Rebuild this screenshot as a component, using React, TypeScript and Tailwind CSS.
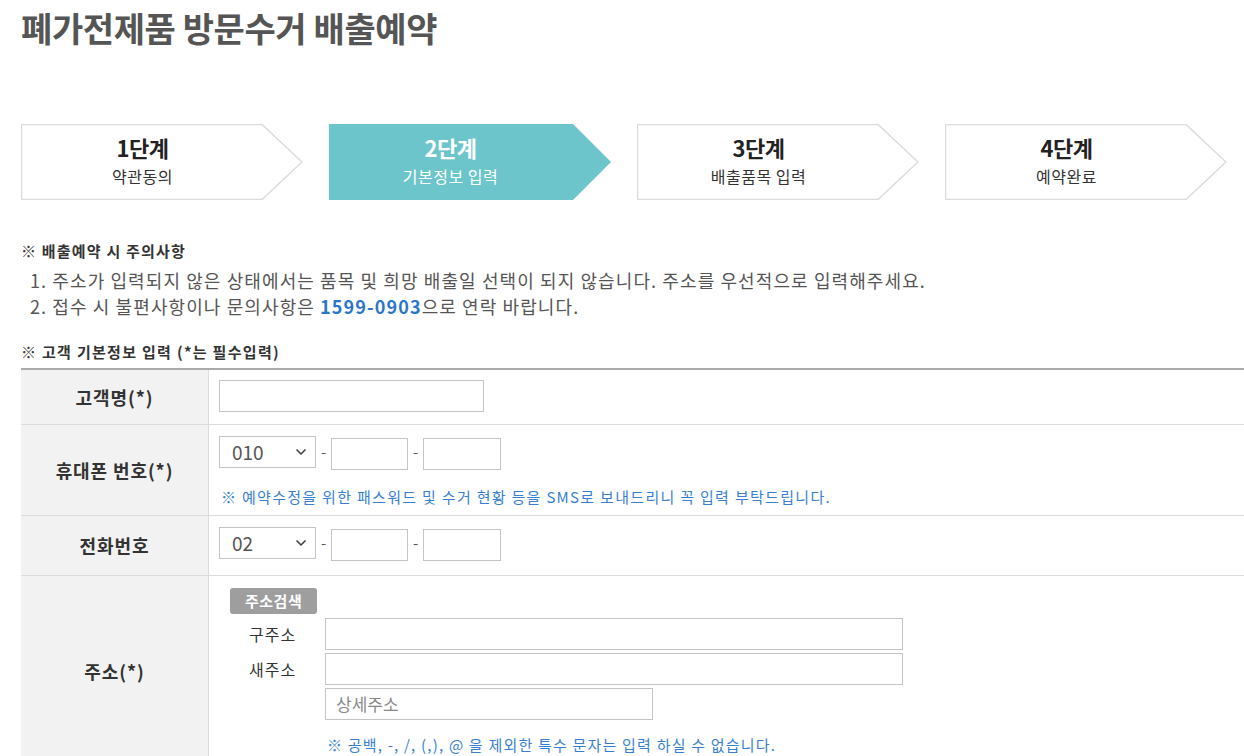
import { ChevronDown } from "lucide-react";

const font = { fontFamily: '"Noto Sans CJK KR", "Noto Sans", sans-serif' };

const steps = [
  { no: "1단계", label: "약관동의", active: false },
  { no: "2단계", label: "기본정보 입력", active: true },
  { no: "3단계", label: "배출품목 입력", active: false },
  { no: "4단계", label: "예약완료", active: false },
];

function Step({ no, label, active }: { no: string; label: string; active: boolean }) {
  return (
    <div className="relative w-[282px] h-[76px] shrink-0">
      <svg className="absolute inset-0" width="282" height="76" viewBox="0 0 282 76">
        {active ? (
          <polygon points="0,0 244,0 282,38 244,76 0,76" fill="#6cc5ca" />
        ) : (
          <polygon
            points="0.5,0.5 241,0.5 281,38 241,75.5 0.5,75.5"
            fill="#fff"
            stroke="#dcdcdc"
            strokeWidth="1.5"
          />
        )}
      </svg>
      <div
        className={`relative flex flex-col items-center justify-center w-[243px] h-full pb-[4px] ${
          active ? "text-white" : "text-[#222]"
        }`}
      >
        <div className="text-[22px] font-bold leading-[26px] tracking-[-0.5px]">{no}</div>
        <div className={`mt-[6px] text-[16px] leading-[20px] tracking-[0.5px] ${active ? "text-white" : "text-[#333]"}`}>
          {label}
        </div>
      </div>
    </div>
  );
}

function Select({ value }: { value: string }) {
  return (
    <div className="flex items-center justify-between w-[97px] h-[32px] border border-[#c4c4c4] bg-white pl-[12px] pr-[6px] text-[19px] text-[#555]">
      <span>{value}</span>
      <ChevronDown size={16} strokeWidth={2.5} className="text-[#444]" />
    </div>
  );
}

function Box({ w }: { w: string }) {
  return <div className={`${w} h-[32px] border border-[#c4c4c4] bg-white`} />;
}

function PhoneRow({ code }: { code: string }) {
  return (
    <div className="flex items-start">
      <Select value={code} />
      <span className="mx-[4px] text-[#555] text-[15px] leading-[32px] w-[7px] text-center">-</span>
      <div className="w-[77px] h-[32px] border border-[#c4c4c4] bg-white mt-[2px]" />
      <span className="mx-[4px] text-[#555] text-[15px] leading-[32px] w-[7px] text-center">-</span>
      <div className="w-[78px] h-[32px] border border-[#c4c4c4] bg-white mt-[2px]" />
    </div>
  );
}

function Label({ children }: { children: React.ReactNode }) {
  return (
    <div className="w-[188px] shrink-0 bg-[#f2f2f2] border-r border-[#dcdcdc] flex items-center justify-center text-[18px] tracking-[0.9px] font-bold text-[#333]">
      {children}
    </div>
  );
}

export default function App() {
  return (
    <div className="w-[1244px] h-[756px] overflow-hidden bg-white pl-[21px]" style={font}>
      <h1 className="pt-[8px] text-[34px] leading-[40px] font-bold text-[#555] tracking-[-0.4px]">
        폐가전제품 방문수거 배출예약
      </h1>

      <div className="flex gap-[26px] mt-[76px]">
        {steps.map((s) => (
          <Step key={s.no} {...s} />
        ))}
      </div>

      <div className="mt-[40px] text-[15px] leading-[22px] tracking-[1.2px] font-bold text-[#333]">※ 배출예약 시 주의사항</div>
      <div className="mt-[5px] pl-[9px] text-[18px] leading-[26px] text-[#555] tracking-[1.1px]">
        <div>1. 주소가 입력되지 않은 상태에서는 품목 및 희망 배출일 선택이 되지 않습니다. 주소를 우선적으로 입력해주세요.</div>
        <div>
          2. 접수 시 불편사항이나 문의사항은 <span className="text-[#2a77c9] font-bold">1599-0903</span>으로 연락 바랍니다.
        </div>
      </div>

      <div className="mt-[22px] text-[15px] leading-[22px] tracking-[1.3px] font-bold text-[#333]">
        ※ 고객 기본정보 입력 (*는 필수입력)
      </div>

      <div className="mt-[5px] border-t-2 border-[#aaaaaa]">
        <div className="flex h-[55px] border-b border-[#dcdcdc]">
          <Label>고객명(*)</Label>
          <div className="pl-[10px] pt-[10px]">
            <Box w="w-[265px]" />
          </div>
        </div>

        <div className="flex h-[91px] border-b border-[#dcdcdc]">
          <Label>휴대폰 번호(*)</Label>
          <div className="pl-[10px] pt-[11px]">
            <PhoneRow code="010" />
            <div className="mt-[17px] pl-[2px] text-[15px] leading-[20px] tracking-[1.3px] text-[#3a7fcf]">
              ※ 예약수정을 위한 패스워드 및 수거 현황 등을 SMS로 보내드리니 꼭 입력 부탁드립니다.
            </div>
          </div>
        </div>

        <div className="flex h-[60px] border-b border-[#dcdcdc]">
          <Label>전화번호</Label>
          <div className="pl-[10px] pt-[11px]">
            <PhoneRow code="02" />
          </div>
        </div>

        <div className="flex h-[200px]">
          <Label>
            <span className="-mt-[10px]">주소(*)</span>
          </Label>
          <div className="pl-[21px] pt-[12px]">
            <button className="h-[26px] px-[15px] rounded-[3px] bg-[#9e9e9e] text-white text-[15px] tracking-[0.5px] font-bold leading-[26px]">
              주소검색
            </button>
            <div className="flex mt-[4px]">
              <div className="w-[95px] flex flex-col text-[16px] tracking-[1px] text-[#333]">
                <div className="h-[35px] leading-[32px] pl-[19px]">구주소</div>
                <div className="h-[35px] leading-[32px] pl-[19px]">새주소</div>
              </div>
              <div className="flex flex-col gap-[3px]">
                <Box w="w-[578px]" />
                <Box w="w-[578px]" />
                <div className="w-[328px] h-[32px] border border-[#c4c4c4] bg-white pl-[10px] text-[17px] leading-[30px] text-[#888]">
                  상세주소
                </div>
                <div className="mt-[12px] pl-[2px] text-[15px] leading-[20px] tracking-[1.2px] text-[#3a7fcf]">
                  ※ 공백, -, /, (,), @ 을 제외한 특수 문자는 입력 하실 수 없습니다.
                </div>
              </div>
            </div>
          </div>
        </div>
      </div>
    </div>
  );
}
